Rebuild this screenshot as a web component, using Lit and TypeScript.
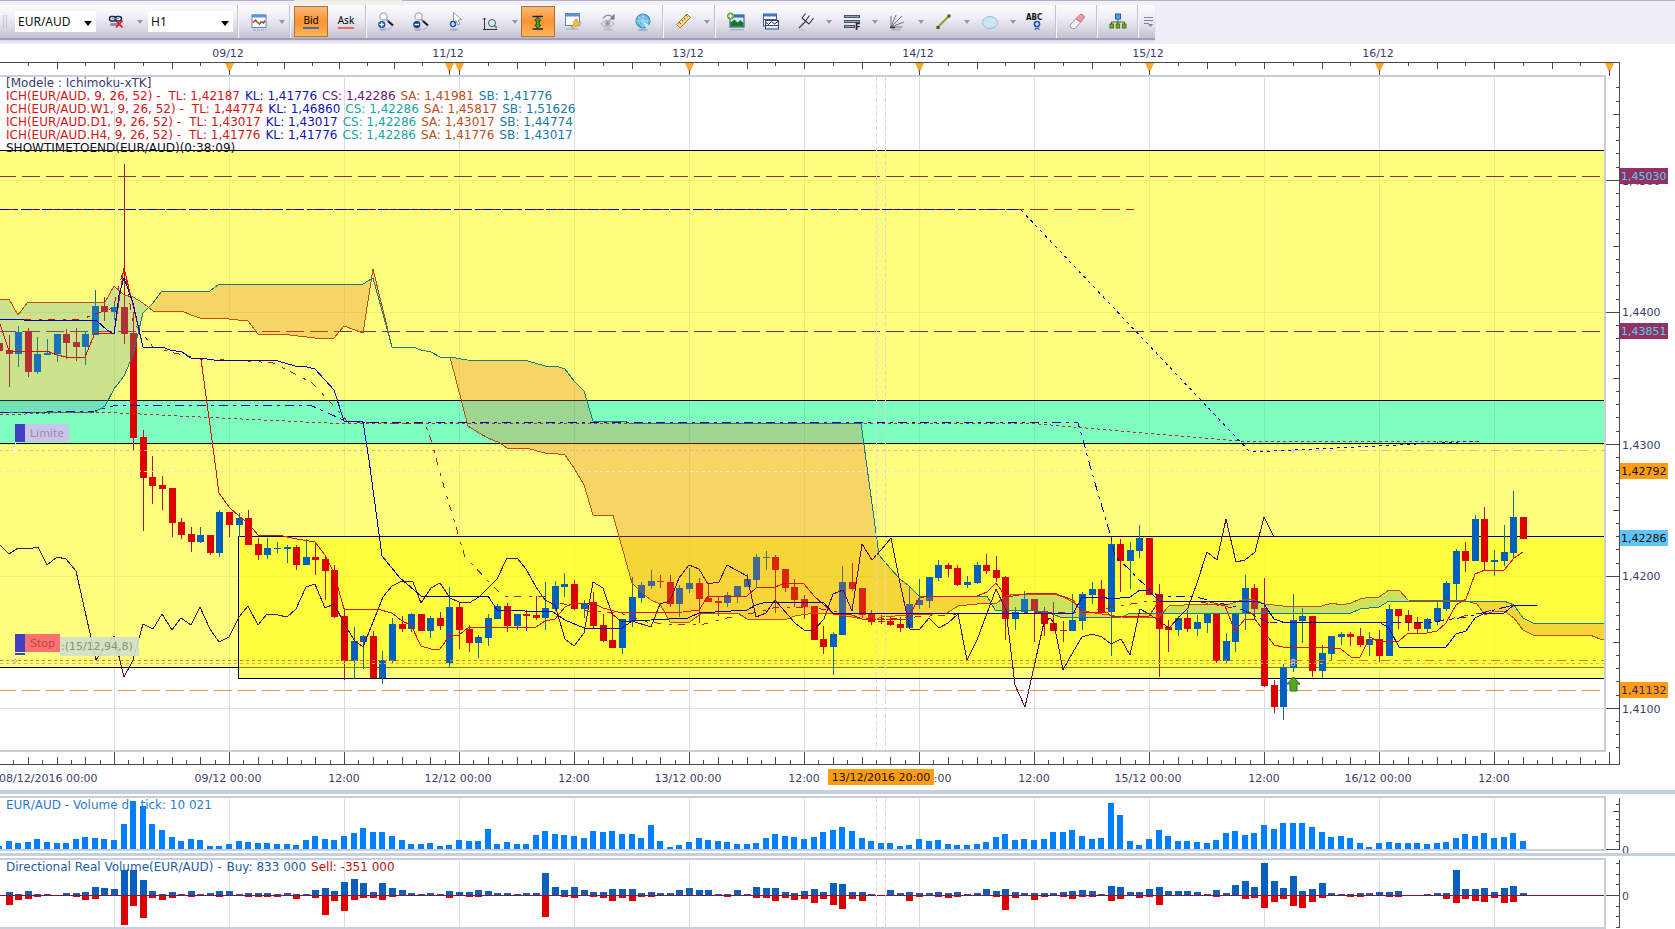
import { LitElement, html, svg, css } from "lit";
import { customElement } from "lit/decorators.js";

/* Horizontal scale: hour 0 is 08/12 00:00, twelve hours span 115 units. */
const xAt = (hour: number) => 114.5 + (hour * 115) / 12;
const PLOT_W = 1606;
const pct = (x: number) => `${(x / PLOT_W) * 100}%`;

/* b = rising, r = falling; body top, body bottom, wick top, wick bottom. */
const CANDLES = `r343 351 343 351|r350 354 335 387|b332 354 326 367|r331 372 328 377|b354 372 337 374|b353 355 339 355|b334 354 334 362|r334 343 329 359|r342 347 328 361|b334 347 331 365|b306 335 290 335|r306 312 297 321|b307 312 301 320|r307 334 164 344|r333 438 312 451|r437 478 430 531|r477 486 456 504|r485 489 476 510|r488 523 488 537|r522 535 518 539|r534 542 527 552|b535 542 527 543|r535 553 535 555|b512 553 510 557|r512 525 512 537|b518 525 513 537|r518 545 510 545|r544 555 538 560|b548 555 538 559|b548 549 542 553|b547 549 545 563|r547 565 545 570|b557 565 539 565|r557 560 542 575|r559 571 557 600|r570 617 565 618|r616 661 608 680|b641 661 627 679|b636 642 635 669|r636 678 631 678|b660 678 651 684|b624 661 618 664|r624 629 616 632|b614 629 613 632|r614 631 614 631|b618 631 616 638|r618 626 612 630|b607 663 587 668|r607 630 602 649|r629 643 625 652|b637 643 635 658|b618 638 614 646|b606 619 604 619|r606 626 603 632|b614 626 614 630|r614 616 610 631|r615 618 596 620|b608 618 582 630|b586 609 581 611|b584 587 573 597|r584 609 580 610|b603 609 600 618|r602 626 592 629|r625 641 614 642|r640 648 613 648|b619 648 619 654|b597 621 577 627|b585 598 582 603|b581 586 570 589|r581 582 575 588|r582 604 575 607|b588 604 585 617|b583 589 568 593|r583 599 578 623|r598 602 583 602|r601 603 597 616|b595 603 592 607|b586 597 586 603|b579 587 574 587|b557 580 554 587|b557 558 551 570|r557 570 555 613|r569 588 569 592|r587 600 579 607|r599 607 595 619|r606 640 606 640|r639 647 626 654|b634 647 632 675|b582 635 566 635|r582 589 563 591|r588 615 588 618|r614 622 610 625|r621 622 615 624|r621 625 617 626|r624 628 617 632|b604 628 587 628|b600 605 579 609|b577 601 577 608|b565 578 560 581|r565 569 563 577|r568 585 565 586|b582 585 576 588|b565 583 562 584|r565 571 554 574|r570 578 556 582|r577 619 576 640|b612 619 607 630|b599 612 591 613|r599 611 599 642|r611 624 607 636|r623 631 602 631|r630 631 621 642|b620 631 594 631|b594 621 592 630|b589 595 582 604|r589 612 580 612|b544 612 537 656|r544 561 539 592|b550 561 542 589|b538 551 525 558|r538 595 538 595|r594 629 584 677|r627 630 620 652|b618 630 616 636|r618 629 610 632|b622 629 615 636|b613 623 613 633|r614 661 614 663|b641 661 633 663|b614 642 614 652|b588 614 575 630|r588 609 584 620|r608 686 578 687|r685 707 680 713|b667 707 664 720|b620 668 594 672|b616 621 608 643|r616 671 616 677|b653 671 645 678|b636 654 636 661|b634 637 632 645|r634 637 632 646|r636 645 628 647|b639 645 632 656|r639 656 630 662|b609 656 605 656|r609 616 609 629|r615 623 610 631|r622 629 617 633|b619 629 618 633|b608 621 600 625|b583 609 581 611|b551 584 549 600|r551 561 542 572|b519 561 515 561|r519 562 507 571|b560 562 550 576|b552 561 525 566|b517 553 491 558|r517 539 517 539`
  .split("|")
  .map((c, i) => {
    const [top, bottom, high, low] = c.slice(1).split(" ").map(Number);
    return { hour: i - 12, up: c[0] === "b", top, bottom, high, low };
  });

const VOLUME = [
  3, 8, 6, 7, 10, 7, 6, 6, 10, 12, 11, 10, 9, 25, 48, 43, 25, 19, 12, 8, 10, 9, 3, 3, 5, 8, 7, 6, 6, 5, 5, 4, 9, 13,
  10, 9, 13, 16, 21, 17, 17, 13, 9, 5, 5, 6, 3, 4, 9, 8, 8, 20, 5, 7, 5, 5, 14, 18, 15, 14, 13, 11, 18, 17, 18, 15,
  15, 11, 24, 8, 2, 4, 7, 11, 9, 8, 7, 5, 5, 6, 11, 15, 13, 12, 10, 12, 17, 19, 22, 18, 11, 8, 6, 6, 3, 4, 10, 8, 9,
  5, 4, 4, 5, 7, 12, 15, 9, 10, 9, 10, 17, 17, 19, 13, 10, 11, 46, 34, 8, 4, 10, 19, 13, 8, 8, 7, 6, 9, 16, 18, 14,
  16, 24, 20, 26, 26, 26, 22, 17, 12, 13, 11, 6, 2, 6, 7, 6, 6, 6, 5, 6, 7, 11, 15, 13, 16, 11, 12, 16, 8,
];

/* Buy height, sell depth per hour. */
const FLOW =
  "0,1 3,10 1,5 4,4 1,2 1,0 0,0 2,0 2,2 3,5 8,4 7,0 6,0 25,30 25,11 15,23 4,3 1,5 3,3 1,0 4,2 1,0 2,0 4,2 4,0 1,0 2,2 2,2 2,2 1,2 2,0 1,4 1,0 5,3 7,20 4,6 13,16 16,5 12,3 3,3 12,5 7,2 5,0 2,0 1,0 2,0 1,0 4,3 3,0 3,2 5,2 4,0 2,0 2,0 1,0 2,0 2,0 22,22 8,0 5,2 8,3 5,0 3,2 3,3 6,6 6,3 6,6 2,2 3,2 2,0 2,0 5,0 7,0 5,0 5,0 1,0 1,2 5,0 1,0 8,3 7,3 7,6 3,3 2,5 4,4 6,8 3,4 12,10 11,14 3,4 3,6 1,0 0,0 5,0 2,0 3,6 2,2 2,0 3,2 2,3 3,2 1,0 2,0 6,0 4,2 6,15 3,3 2,0 2,5 2,2 2,0 3,2 4,4 5,2 4,2 1,0 9,6 8,4 3,0 3,3 6,2 8,10 4,0 4,0 4,0 3,0 1,0 5,2 2,0 10,0 14,4 8,3 32,13 14,7 7,4 19,11 4,13 6,7 12,3 2,0 1,0 1,2 2,2 2,0 3,0 3,2 4,2 0,0 0,0 1,0 2,0 2,4 25,8 6,4 6,6 7,7 3,3 7,8 9,7 2,0"
    .split(" ")
    .map((p) => p.split(",").map(Number));

const SENKOU_A =
  "0,299 9,299 18,315 28,302 105,302 114,286 124,295 133,297 143,303 153,311 182,311 191,315 200,318 219,318 248,321 258,334 290,335 315,338 334,338 344,326 363,333 373,269 392,347 413,347 421,350 431,352 440,357 450,357 468,426 479,433 488,438 500,443 507,448 526,448 545,453 558,454 565,455 574,468 584,485 593,515 613,515 632,583 641,592 651,600 660,604 670,622 690,622 702,613 738,613 747,619 787,619 795,616 814,613 833,614 852,617 862,619 877,619 881,617 910,615 933,614 947,613 958,606 977,604 997,603 1006,596 1015,594 1054,594 1063,597 1073,602 1082,611 1102,614 1122,617 1159,617 1169,606 1200,604 1230,604 1245,599 1255,600 1264,604 1283,606 1322,606 1332,603 1341,605 1351,603 1360,599 1370,597 1379,597 1389,590 1399,590 1408,600 1466,601 1477,604 1485,615 1494,611 1504,611 1514,618 1523,630 1533,635 1590,635 1600,639 1605,639";
const SENKOU_B =
  "0,413 95,412 105,406 114,389 124,376 133,355 143,313 153,303 162,291 210,291 219,284 363,284 373,278 392,347 413,347 421,350 431,352 440,357 450,357 467,360 528,361 545,366 556,366 565,369 574,381 584,391 593,421 624,421 629,423 861,423 879,555 890,568 900,579 909,586 919,596 987,596 995,610 1034,611 1050,613 1060,617 1077,618 1122,617 1130,613 1351,613 1360,609 1379,607 1389,601 1504,601 1514,605 1523,618 1533,623 1605,623";
const TENKAN =
  "0,324 9,351 47,351 57,355 66,357 85,357 95,333 114,334 124,268 133,305 143,347 162,347 170,350 182,352 191,358 201,359 212,440 219,493 229,507 240,517 248,523 258,535 278,535 297,539 315,542 325,555 334,573 344,609 377,609 392,613 402,621 411,625 421,646 431,649 440,649 450,635 459,635 469,627 536,627 545,621 555,619 565,607 574,603 593,603 603,608 622,613 683,612 699,610 708,596 747,596 756,588 775,587 785,583 804,584 814,596 824,605 833,614 852,615 862,619 907,619 919,598 929,596 977,596 987,592 996,583 1006,597 1033,593 1054,593 1073,600 1082,612 1107,612 1111,616 1130,616 1149,616 1159,601 1210,602 1225,606 1235,631 1245,619 1255,619 1274,645 1283,647 1322,647 1341,649 1351,657 1360,657 1370,637 1379,642 1399,641 1408,633 1427,633 1437,631 1446,623 1456,605 1466,599 1475,574 1485,570 1504,570 1514,558 1523,552";
const KIJUN =
  "0,319 24,320 96,320 107,330 114,334 119,295 124,278 133,303 143,347 162,347 170,350 182,352 191,358 200,358 213,360 278,361 295,366 307,367 315,369 334,390 344,421 363,422 369,460 382,556 400,578 421,596 488,596 497,610 553,612 565,620 584,628 622,628 632,621 688,618 699,613 747,610 756,605 766,602 823,602 833,613 1000,613 1073,614 1082,597 1102,597 1111,599 1130,597 1140,590 1149,591 1159,601 1255,601 1264,604 1274,619 1283,622 1379,622 1389,628 1399,647 1446,647 1456,634 1466,631 1475,618 1485,613 1504,613 1514,605 1537,605";
const CHIKOU =
  "0,545 9,554 18,548 33,548 38,547 47,565 57,557 66,559 76,571 96,660 114,636 124,677 133,660 143,624 153,629 162,614 172,630 181,618 191,625 200,607 210,629 219,642 229,637 239,617 248,606 258,625 267,614 278,615 287,617 296,609 306,587 315,584 325,608 334,604 344,623 354,640 363,647 373,622 383,597 392,586 402,581 413,582 421,603 431,588 440,583 450,598 459,602 469,603 479,597 497,579 507,558 517,558 526,569 536,587 545,600 555,605 565,639 574,646 584,633 593,582 603,588 612,614 622,622 632,621 651,627 660,604 670,601 679,578 689,565 699,569 708,584 719,582 727,565 747,576 756,617 766,613 775,600 795,623 804,630 814,630 824,619 833,594 843,590 852,611 862,544 872,560 881,550 891,538 900,583 910,629 919,630 929,618 939,628 948,623 958,614 967,660 977,640 996,589 1006,610 1015,685 1025,707 1034,667 1044,622 1050,618 1054,623 1063,670 1073,652 1082,637 1092,634 1102,637 1111,644 1121,639 1130,655 1140,609 1149,614 1169,628 1183,613 1188,608 1197,583 1207,552 1217,560 1226,519 1236,562 1245,560 1255,552 1264,517 1274,537";
const DAY_RED = "0,415 50,413 100,412 200,417 327,423 1027,423 1239,441 1479,441";
const DAY_BLUE = "0,413 95,411 117,405 310,405 348,422 1078,423 1083,440 1092,473 1111,537 1115,557 1128,568 1137,578 1153,592 1158,596 1197,597 1207,600 1237,607 1245,611 1267,622 1433,622 1466,617 1514,605 1537,605";
const H4_RED =
  "0,319 83,319 92,315 113,308 124,268 133,322 153,347 170,352 200,359 248,361 273,363 293,373 312,383 334,406 348,422 387,423 425,423 432,443 440,473 450,507 465,557 497,590 503,596 543,596 557,602 587,611 620,613 647,622 667,624 700,625 727,618 758,612 777,607 803,607 830,610 862,618 900,618 960,614 1087,612 1113,607 1150,601 1200,602 1245,610 1267,622 1433,622 1485,612 1514,605 1537,605";
const WEEK_BLUE = "1021,210 1250,452 1479,441";

const LEGEND: [string, string, string, string, string, string, boolean][] = [
  ["ICH(EUR/AUD, 9, 26, 52) -", "TL: 1,42187", "KL: 1,41776", "CS: 1,42286", "SA: 1,41981", "SB: 1,41776", true],
  ["ICH(EUR/AUD.W1, 9, 26, 52) -", "TL: 1,44774", "KL: 1,46860", "CS: 1,42286", "SA: 1,45817", "SB: 1,51626", false],
  ["ICH(EUR/AUD.D1, 9, 26, 52) -", "TL: 1,43017", "KL: 1,43017", "CS: 1,42286", "SA: 1,43017", "SB: 1,44774", false],
  ["ICH(EUR/AUD.H4, 9, 26, 52) -", "TL: 1,41776", "KL: 1,41776", "CS: 1,42286", "SA: 1,41776", "SB: 1,43017", false],
];

const GRID_X = Array.from({ length: 13 }, (_, i) => 114.5 + i * 115);

const lens = svg`<circle cx="6.500" cy="4.500" r="3.600" fill="#fafbfc" stroke="#b4b8c0" stroke-width="1.500"/><path d="M9.500 7.500l1.500 1.500" stroke="#8c9098" stroke-width="2"/><path d="M11 9l5 4.500" stroke="#202028" stroke-width="2.200"/><ellipse cx="6" cy="17.500" rx="3.500" ry="1.500" fill="#6880a8" opacity=".4"/><path d="M11 18l4-3" stroke="#888c9c" stroke-width="1.500" opacity=".4"/>`;

const ICONS: Record<string, unknown> = {
  chain: svg`<g fill="none" stroke="#1c2c4c" stroke-width="1.600"><rect x="2.500" y="4.500" width="6.500" height="4.500" rx="2.200"/><rect x="8" y="4.500" width="6.500" height="4.500" rx="2.200"/></g><path d="M5 6.700h7" stroke="#7890b0"/><rect x="3" y="11" width="10" height="3" rx="1.500" fill="#30456c" opacity=".5"/><path d="M9 8.500l6.500 7M15.500 8.500L9 15.500" stroke="#e01818" stroke-width="1.800"/>`,
  chart: svg`<rect x="3" y="3" width="14" height="12.500" fill="#fff" stroke="#5c84bc"/><rect x="3" y="2.500" width="14" height="3" fill="#5c94d8"/><path d="M4 10.500l2.500-2.500 2 2.500" fill="none" stroke="#d82020" stroke-width="1.500"/><path d="M8.500 10.500l2 1.500 2-2.500" fill="none" stroke="#208020" stroke-width="1.500"/><path d="M12.500 9.500l2 1.500 1.500-2.500" fill="none" stroke="#d82020" stroke-width="1.500"/><path d="M4 18h13" stroke="#90a8d0" stroke-width="2" stroke-dasharray="3 1" opacity=".5"/>`,
  zoomin: svg`${lens}<circle cx="4.800" cy="12.500" r="3.600" fill="#1850a8"/><path d="M2.500 12.500h4.600M4.800 10.200v4.600" stroke="#fff" stroke-width="1.300"/>`,
  zoomout: svg`${lens}<circle cx="4.800" cy="12.500" r="3.600" fill="#103c88"/><path d="M2.500 12.500h4.600" stroke="#fff" stroke-width="1.500"/>`,
  cursor: svg`<path d="M6.500.5v10l2.500-2 2 4.500 2-1-2-4 3.500-.5z" fill="#fdfdfe" stroke="#9498a4"/><circle cx="6" cy="12" r="3.200" fill="#2058b0"/><path d="M4 12h4M6 10v4" stroke="#fff" stroke-width="1.200"/><ellipse cx="7" cy="17.500" rx="4" ry="1.500" fill="#6880a8" opacity=".4"/>`,
  axis: svg`<path d="M2.500 6v12M1 7.500L2.500 6 4 7.500M1 17.500h14" fill="none" stroke="#333"/><circle cx="10" cy="11" r="3.500" fill="#c0f4f8" stroke="#505860"/><path d="M12.500 13.500l2.500 2.500" stroke="#a07040" stroke-width="1.800"/>`,
  fit: svg`<path d="M4.500 4.500h10.500M4.500 17h10.500" stroke="#222" stroke-width="1.300"/><path d="M9.800 5l3 3.500h-1.500v4.500h1.500l-3 3.500-3-3.500h1.500V8.500H6.800z" fill="#48a028" stroke="#145014"/>`,
  palette: svg`<rect x="2.500" y="1.500" width="14" height="12" fill="#fff" stroke="#5c84bc"/><rect x="2.500" y="1.500" width="14" height="3" fill="#5c94d8"/><path d="M8 15l3-3c-1-3 1-5 3.500-5l-.5 3h3.500c.5 3-2 4.500-4.500 4l-3 2.500z" fill="#f8c040" stroke="#c08010" stroke-width=".6"/><rect x="3" y="16" width="12" height="2" fill="#90a8d0" opacity=".5"/>`,
  eye: svg`<path d="M3 12c3.500-5 10-5 13 0-3.500 4-9.500 4-13 0z" fill="#e4e4e8" stroke="#a4a4ac"/><circle cx="9.500" cy="11.500" r="3" fill="#b4b4bc"/><circle cx="9.500" cy="11.500" r="1.200" fill="#808088"/><path d="M5 6.500C7 3 11 2.500 14 4.500" fill="none" stroke="#8c8c94" stroke-width="1.300"/><path d="M16.500 1.500v6h-5z" fill="#787880"/><ellipse cx="10" cy="17.500" rx="5" ry="1.200" fill="#90909c" opacity=".4"/>`,
  globe: svg`<circle cx="10" cy="9" r="7" fill="#5cb4e4" stroke="#3480b4"/><path d="M10 9L16 13a7 7 0 0 1-3 3z" fill="#d8f4fc"/><g fill="none" stroke="#b8e0f4" stroke-width=".7"><circle cx="10" cy="9" r="4.500"/><circle cx="10" cy="9" r="2"/><path d="M3 9h14M10 2v14M5 4l10 10"/></g><ellipse cx="10" cy="18" rx="5" ry="1.200" fill="#5080c0" opacity=".4"/>`,
  ruler: svg`<path d="M2.500 12.500L13 2l3.500 3.500L6 16z" fill="#f8d488" stroke="#b87c20"/><path d="M5 10l2 2M7.500 7.500l1.500 1.500M9.500 5.500l2 2M12 3l1.500 1.500" stroke="#8c5c10"/>`,
  image: svg`<rect x="4" y="3" width="14" height="12" fill="#d8ecfc" stroke="#204878"/><rect x="4" y="3" width="14" height="2.500" fill="#3870b8"/><path d="M4.500 14.500v-4l4-3 3 3 3-2.500 3 3v3.500z" fill="#107830"/><circle cx="4.500" cy="4" r="3.500" fill="#68a828"/><path d="M2.500 4h4M4.500 2v4" stroke="#fff" stroke-width="1.300"/><rect x="4" y="17" width="14" height="1.500" fill="#4c9080" opacity=".4"/>`,
  windows: svg`<rect x="2.500" y="2" width="13" height="12" fill="#fff" stroke="#386098"/><rect x="2.500" y="2" width="13" height="2.500" fill="#4078c8"/><path d="M2.500 7.500h13" stroke="#386098"/><rect x="4.500" y="8.500" width="13" height="5" fill="#fff" stroke="#284878"/><path d="M5 10.500l2.500 2 3-3 3 2.500 3.500-2.500" fill="none" stroke="#101010"/><rect x="4.500" y="13.500" width="13" height="3.500" fill="#e8f0fc" stroke="#284878"/>`,
  fork: svg`<path d="M3 16L10 9M6 6l7 6M9.500 1.500L6 6M17.500 6L13 12M13.500 3.500L9.500 9" fill="none" stroke="#3c3c44" stroke-width="1.200"/><path d="M3 18h6" stroke="#888" opacity=".4"/>`,
  lines: svg`<g stroke="#455468" stroke-width="3"><path d="M2 4.500h16M2 9.500h16M2 14.500h11"/></g><path d="M3 4.500h14M3 9.500h14M3 14.500h9" stroke="#94a0b4"/><text x="13" y="18" font-family="DejaVu Sans" font-size="8" font-weight="bold" fill="#222">F</text>`,
  fan: svg`<path d="M3 15V4M3 15L8 3M3 15L14 4M3 15l13-5M3 15h11" fill="none" stroke="#70767c"/><path d="M2 15.500h5" stroke="#303438" stroke-width="1.500"/><ellipse cx="8" cy="17.500" rx="5" ry="1" fill="#777" opacity=".4"/>`,
  line: svg`<path d="M4 15L15 4" stroke="#88a820" stroke-width="2"/><rect x="2.500" y="14" width="3" height="3" fill="#48580c"/><rect x="13.500" y="2.500" width="3" height="3" fill="#48580c"/>`,
  ellipse: svg`<ellipse cx="10" cy="10.500" rx="7.500" ry="6" fill="#cce4f4" stroke="#98bcd8"/>`,
  label: svg`<text x="0" y="8" font-family="DejaVu Sans Condensed, DejaVu Sans" font-size="8" font-weight="bold" fill="#111">ABC</text><circle cx="11" cy="12" r="3.300" fill="#1c50b0"/><path d="M9 12h4M11 10v4" stroke="#fff" stroke-width="1.200"/><path d="M9 15.500l-.5 3 2.500-1.500 2.500 1.500-.5-3z" fill="#5070a8"/>`,
  eraser: svg`<path d="M3 13L9 6.500l4.500 4L8 16.500H5.500L3 15z" fill="#f8f6f8" stroke="#98949c"/><path d="M9 6.500L13 2.500h2.500l2 2.500-4 5.500z" fill="#ec98a0" stroke="#c07880"/>`,
  tree: svg`<path d="M10 6v4M3.500 13v-3h13v3M10 10v3" fill="none" stroke="#406010"/><rect x="7.500" y="2" width="5" height="5" fill="#4ca0f0" stroke="#1c5ca8"/><g fill="#7cb020" stroke="#406c10"><rect x="2" y="12" width="3.500" height="4"/><rect x="8.200" y="12" width="3.500" height="4"/><rect x="14.500" y="12" width="3.500" height="4"/></g>`,
};

@customElement("tool-bar")
class ToolBar extends LitElement {
  static styles = css`
    :host { display: block; height: 44px; background: linear-gradient(90deg, #b4aec6 0 294px, #f6ecc4 294px 402px, #b4aec6 402px) top / 100% 1px no-repeat, #f0eff8; padding-top: 5px; box-sizing: border-box; }
    .bar { display: flex; align-items: center; gap: 1px; height: 35px; width: max-content; padding-right: 1px; box-sizing: border-box; background: linear-gradient(#fdfdfe, #eeedf4 40%, #d6d5e2 75%, #c2c0d2); border-bottom: 2px solid #a09fb6; box-shadow: 0 2px 2px #dcdae8; }
    .grip { width: 11px; height: 14px; margin-right: 3px; background: repeating-linear-gradient(90deg, #c8c6d6 0 1px, transparent 1px 3px) 3px 0 / 6px 100% no-repeat; }
    .field { position: relative; display: block; height: 21px; background: #fff; }
    .field::after { content: ""; position: absolute; right: 4px; top: 10px; border: 4px solid transparent; border-top: 5px solid #000; border-bottom: 0; pointer-events: none; }
    .pair { width: 81px; margin-right: 3px; }
    .period { width: 85px; margin: 0 2px; }
    select { appearance: none; width: 100%; height: 21px; border: 0; padding: 0 3px; background: transparent; font: 12px/21px "Noto Sans", sans-serif; color: #111; }
    button { border: 1px solid transparent; background: none; padding: 0; height: 31px; display: grid; place-items: center; font: 11px/12px "Noto Sans", sans-serif; color: #000; }
    .tool { width: 34px; }
    .on { background: linear-gradient(#f8b878, #fc9430 50%, #ffb45c); border-color: #a87430; }
    .drop { width: 10px; }
    .drop::before { content: ""; border: 3px solid transparent; border-top: 4px solid #9896a8; border-bottom: 0; }
    .sep { width: 1px; height: 33px; background: #f8f8fc; border-left: 1px solid #c4c2d2; margin: 0 2px 0 1px; }
    svg { width: 20px; height: 20px; }
    .side { border-bottom: 2px solid #4c6ea8; padding-bottom: 1px; font-size: 10px; line-height: 11px; }
    .ask { border-color: #e86850; }
    .more { width: 12px; }
    .more svg { width: 9px; height: 12px; }
  `;
  tool(name: string, label: string, drop = false, on = false) {
    return html`<button class="tool ${on ? "on" : ""}" aria-label=${label} title=${label}><svg viewBox="0 0 20 20">${ICONS[name]}</svg></button>${drop ? html`<button class="drop" aria-label="${label} options"></button>` : ""}`;
  }
  render() {
    const sep = html`<span class="sep"></span>`;
    return html`<div class="bar" role="toolbar">
      <span class="grip"></span>
      <label class="field pair"><select aria-label="Symbol"><option>EUR/AUD</option></select></label>
      ${this.tool("chain", "Link", true)}
      <label class="field period"><select aria-label="Period"><option>H1</option></select></label>
      ${sep}${this.tool("chart", "Chart", true)}${sep}
      <button class="tool on"><span class="side">Bid</span></button>
      <button class="tool"><span class="side ask">Ask</span></button>
      ${sep}${this.tool("zoomin", "Zoom in")}${this.tool("zoomout", "Zoom out")}${this.tool("cursor", "Cursor")}${this.tool("axis", "Axis zoom", true)}
      ${this.tool("fit", "Fit height", false, true)}${this.tool("palette", "Colours")}${this.tool("eye", "Refresh view")}${this.tool("globe", "Market")}
      ${sep}${this.tool("ruler", "Measure", true)}${sep}
      ${this.tool("image", "Add indicator")}${this.tool("windows", "Windows")}${this.tool("fork", "Pitchfork", true)}${this.tool("lines", "Fibonacci", true)}
      ${this.tool("fan", "Fan", true)}${this.tool("line", "Line", true)}${this.tool("ellipse", "Ellipse", true)}${this.tool("label", "Text label")}
      ${sep}${this.tool("eraser", "Erase")}${sep}${this.tool("tree", "Structure")}${sep}
      <button class="more" aria-label="More"><svg viewBox="0 0 9 12"><path d="M0 1.500h9M0 4.500h9M0 7.500h5" stroke="#84829a"/><path d="M4 8h5l-2.500 3z" fill="#84829a"/></svg></button>
    </div>`;
  }
}

const common = css`
  :host { display: grid; grid-template-columns: minmax(0, 1fr) 69px; font: 12px/13px "DejaVu Sans", Verdana, sans-serif; color: #3c3c6c; background: #fff; }
  svg { display: block; width: 100%; height: 100%; overflow: visible; }
  text { font: 11px "DejaVu Sans", Verdana, sans-serif; fill: #3c3c6c; }
  .crisp { shape-rendering: crispEdges; fill: none; }
  .axis { stroke: #4a4a4a; }
  .grid { stroke: #dcdce0; }
  .frame { position: relative; overflow: hidden; border: solid #c8cfda; border-width: 2px 2px 2px 0; box-sizing: border-box; }
  .cross { stroke: #d8d8dc; stroke-dasharray: 4 3; }
`;

@customElement("price-chart")
class PriceChart extends LitElement {
  static styles = [
    common,
    css`
      :host { grid-template-rows: 31px minmax(300px, 1fr) 38px; flex: 1; overflow: hidden; }
      .price { min-height: 0; }
      .canvas { position: absolute; inset: 0; }
      .zone { fill: #ffff00; fill-opacity: 0.5; }
      .mint { fill: #00ff80; fill-opacity: 0.5; }
      .edge { stroke: #000; }
      .up { fill: #0060c0; stroke: none; }
      .down { fill: #dc0000; stroke: none; }
      .wup { stroke: #107080; }
      .wdown { stroke: #b80c20; }
      .level { stroke: #84304c; stroke-dasharray: 18 6; stroke-dashoffset: 2; }
      .amber { stroke: #e89830; }
      .tenkan { stroke: #dc1000; }
      .h4 { stroke: #c41400; stroke-dasharray: 7 8 3 6; }
      .day { stroke: #a83820; }
      .kijun { stroke: #0000b8; }
      .chikou { stroke: #600848; }
      .sa { stroke: #c04c10; }
      .sb { stroke: #107c8c; }
      .dot { stroke-dasharray: 3 3; }
      .sparse { stroke-dasharray: 3 4; }
      .dash { stroke-dasharray: 9 5 3 5; }
      .long { stroke-dasharray: 10 3 5 3; }
      .lilac { stroke: #d0b4c4; }
      .faint { stroke: #ece4d0; }
      .stopline { stroke: #f07000; }
      .khaki { stroke: #c4bc70; }
      .legend { position: relative; padding-left: 6px; }
      .line { white-space: nowrap; }
      .row { display: flex; gap: 5px; }
      .row :nth-child(2) { margin-left: 3px; }
      .model { color: #3c3c6c; }
      .tl { color: #d41414; }
      .kl { color: #1010b4; }
      .cs { color: #741080; }
      .csx { color: #18a4a0; }
      .ca { color: #bc4c18; }
      .cb { color: #1878a8; }
      .time { color: #101010; }
      .limit { fill: #d4c0ec; fill-opacity: 0.9; }
      .tagtext { fill: #a088b0; }
      .stoptext { fill: #b84848; }
      .ordertext { fill: #7c9c70; }
      .hot { fill: #ff9c10; }
      .black { fill: #101010; }
      .cyan { fill: #50d0f0; }
      .violet { fill: #402070; }
      .orange { fill: #f8a82c; }
    `,
  ];
  line(points: string, cls: string) {
    return svg`<polyline class="crisp ${cls}" points=${points}/>`;
  }
  ruler() {
    const ticks: { x: number; deep: boolean }[] = [];
    for (let i = -3; i < 4; i++) ticks.push({ x: 229.5 - (4 - i) * 28.75, deep: i % 2 === 0 });
    for (let i = 1; i < 8; i++) ticks.push({ x: 229.5 + i * 27.5, deep: i % 2 === 0 });
    for (let i = 1; i < 40; i++) ticks.push({ x: 459.5 + i * 28.75, deep: i % 2 === 0 });
    const marks = [229.5, 449.5, 459.5, 689.5, 919.5, 1149.5, 1379.5, 1609.5];
    const labels: [number, string][] = [[228, "09/12"], [448, "11/12"], [688, "13/12"], [918, "14/12"], [1148, "15/12"], [1378, "16/12"]];
    return html`<svg>
      <svg viewBox="0 44 1606 31" preserveAspectRatio="none">
        <path class="crisp axis" d="M0 62.500H1620M${ticks.map((t) => `${t.x} 62v${t.deep ? 7 : 4}`).join("M")}"/>
        ${marks.map((x) => svg`<path class="orange" d="M${x - 4.5} 63h9l-4.500 10z"/><path class="crisp axis" d="M${x} 70v6"/>`)}
      </svg>
      ${labels.map(([x, t]) => svg`<text x=${pct(x)} y="13" text-anchor="middle">${t}</text>`)}
    </svg>`;
  }
  plot() {
    return html`<div class="frame">
      <div class="canvas"><svg>
        <svg viewBox="0 77 1604 673" preserveAspectRatio="none">
          <defs><linearGradient id="cloud" gradientUnits="userSpaceOnUse" x1="0" y1="0" x2="1604" y2="0">
            ${[[0, 148, 1], [148, 991, 0], [991, 1078, 1], [1078, 1162, 0], [1162, 1410, 1], [1410, 1604, 0]].map(([a, b, g]) => {
              const c = g ? "#559ea8" : "#e47629";
              return svg`<stop offset=${a / 1604} stop-color=${c}/><stop offset=${b / 1604} stop-color=${c}/>`;
            })}
          </linearGradient></defs>
          <path class="crisp grid" d="${GRID_X.map((x) => `M${x} 77v673`).join("")}${[180.5, 312.5, 444.5, 576.5, 708.5].map((y) => `M0 ${y}h1605`).join("")}"/>
          <rect class="zone" x="0" y="151" width="1605" height="249"/>
          <rect class="mint" x="0" y="400" width="1605" height="43"/>
          <rect class="zone" x="0" y="443" width="1605" height="224"/>
          <path class="crisp edge" d="M0 150.500H1605M0 400.500H1605M0 443.500H1605M0 667.500H1605"/>
          <rect class="zone" x="238" y="537" width="1367" height="141"/>
          <path class="crisp edge" d="M1605 536.500H238.500V678.500H1605"/>
          <path class="crisp level" d="M0 176.500H1604M0 331.500H1604"/>
          <path class="crisp level amber" d="M0 690.500H1604"/>
          ${CANDLES.map((c) => {
            const x = Math.floor(xAt(c.hour));
            return svg`<path class="crisp ${c.up ? "wup" : "wdown"}" d="M${x + 0.5} ${c.high}V${c.low}"/><rect class=${c.up ? "up" : "down"} x=${x - 3} y=${c.top} width="7" height=${Math.max(1, c.bottom - c.top)}/>`;
          })}
          <path fill="url(#cloud)" fill-opacity=".3" d="M${SENKOU_A.split(" ").join("L")}L${SENKOU_B.split(" ").reverse().join("L")}Z"/>
          <path class="crisp lilac dot" d="M0 450.500H1293"/>
          <path class="crisp lilac dash" d="M1293 450.500H1604"/>
          <path class="crisp faint dot" d="M0 471.500H1604"/>
          <path class="crisp khaki dot" d="M0 663.500H1604"/>
          <path class="crisp stopline dot" d="M0 660.500H1293"/>
          <path class="crisp stopline dash" d="M1293 660.500H1604"/>
          ${this.line(SENKOU_A, "sa")}${this.line(SENKOU_B, "sb")}${this.line(CHIKOU, "chikou")}
          ${this.line(TENKAN, "tenkan")}${this.line(H4_RED, "h4")}${this.line(KIJUN, "kijun")}
          ${this.line(DAY_RED, "day dot")}${this.line(DAY_BLUE, "kijun dash")}
          ${this.line("0,209.5 1021,209.5 1134,209.5", "tenkan level")}${this.line("0,209.5 1021,209.5", "kijun long")}${this.line(WEEK_BLUE, "kijun sparse")}
          <path class="crisp cross" d="M876.500 77V750M885.500 77V750"/>
          <g fill="none" stroke="#c8c0d8"><circle cx="1293" cy="451" r="1.500"/><circle cx="1293" cy="661" r="2"/><circle cx="1293" cy="664" r="2"/></g>
          <path d="M1293.500 677l6.500 7h-3v7h-7v-7h-3z" fill="#54a81c" stroke="#2c6c10"/>
          <path class="crisp" d="M15.500 442v8M15.500 652v8" stroke="#f4e4e4"/>
          <circle cx="15" cy="451" r="1.500" fill="#fff"/><circle cx="15" cy="661" r="1.500" fill="#fff" stroke="#f09080"/>
          <rect x="15" y="424" width="10" height="18" fill="#4040c4"/><rect class="limit" x="25" y="424" width="44" height="18"/>
          <rect x="60" y="637" width="79" height="19" fill="#d0e0cc" fill-opacity=".9"/>
          <rect x="15" y="634" width="10" height="18" fill="#4040c4"/><rect x="15" y="653" width="10" height="2" fill="#4040c4"/><rect x="25" y="634" width="35" height="18" fill="#ff7070"/>
        </svg>
        <text class="tagtext" x=${pct(30)} y="53.5%">Limite</text>
        <text class="stoptext" x=${pct(30)} y="84.7%">Stop</text>
        <text class="ordertext" x=${pct(61)} y="85.1%">:(15/12,94,8)</text>
      </svg></div>
      <div class="legend">
        <div class="line model">[Modele : Ichimoku-xTK]</div>
        ${LEGEND.map(([n, tl, kl, cs, sa, sb, own]) => html`<div class="line row"><span class="tl">${n}</span><span class="tl">${tl}</span><span class="kl">${kl}</span><span class=${own ? "cs" : "csx"}>${cs}</span><span class="ca">${sa}</span><span class="cb">${sb}</span></div>`)}
        <div class="line time">SHOWTIMETOEND(EUR/AUD)(0:38:09)</div>
      </div>
    </div>`;
  }
  prices() {
    const ys = Array.from({ length: 51 }, (_, i) => ({ i, y: 87.9 + i * 13.2 }));
    const py = (y: number, shift = 0) => `${((y + shift - 75) / 677) * 100}%`;
    const labels: [number, string][] = [[180.5, "1,4500"], [312.5, "1,4400"], [444.5, "1,4300"], [576.5, "1,4200"], [708.5, "1,4100"]];
    const tags: [number, string, string, string][] = [
      [176, "1,45030", "#943064", "cyan"], [331, "1,43851", "#943064", "cyan"], [471, "1,42792", "#ff9c10", "black"], [538, "1,42286", "#60c4f8", "black"], [690, "1,41132", "#ff9c10", "violet"],
    ];
    return html`<svg class="price">
      <svg viewBox="0 75 69 677" preserveAspectRatio="none">
        <path class="crisp axis" d="M13.500 62V765${ys.map(({ i, y }) => { const k = (i + 3) % 10; const w = k === 0 ? 14 : k === 5 ? 7 : 4; return `M13.500 ${y}h${-w}`; }).join("")}"/>
      </svg>
      ${labels.map(([y, t]) => svg`<text x="16" y=${py(y, 4)}>${t}</text>`)}
      ${tags.map(([y, t, bg, c]) => svg`<rect x="14" y=${py(y, -8)} width="48" height="16" fill=${bg}/><text class=${c} x="15" y=${py(y, 4)}>${t}</text>`)}
    </svg>`;
  }
  times() {
    const labels: [number, string][] = [[228, "09/12 00:00"], [344, "12:00"], [458, "12/12 00:00"], [574, "12:00"], [688, "13/12 00:00"], [804, "12:00"], [918, "14/12 00:00"], [1034, "12:00"], [1148, "15/12 00:00"], [1264, "12:00"], [1378, "16/12 00:00"], [1494, "12:00"]];
    const ticks = Array.from({ length: 112 }, (_, i) => i - 7).map((i) => `M${114.5 + i * 14.375} 764v${i % 8 === 0 ? -12 : i % 2 === 0 ? -7 : -4}`);
    return html`<svg>
      <svg viewBox="0 752 1606 38" preserveAspectRatio="none"><path class="crisp axis" d="M0 764.500H1620${ticks.join("")}M1609.500 752v12"/></svg>
      <text x="-1" y="30">08/12/2016 00:00</text>
      ${labels.map(([x, t]) => svg`<text x=${pct(x)} y="30" text-anchor="middle">${t}</text>`)}
      <svg x=${pct(828)} y="17" width="106" height="16"><rect class="hot" width="106" height="16"/><text class="black" x="53" y="12" text-anchor="middle">13/12/2016 20:00</text></svg>
    </svg>`;
  }
  render() {
    return html`<div>${this.ruler()}</div><span></span>${this.plot()}<div>${this.prices()}</div><div>${this.times()}</div>`;
  }
}

@customElement("volume-panel")
class VolumePanel extends LitElement {
  static styles = [
    common,
    css`
      :host { border-top: 4px solid #c4d0de; padding-top: 2px; height: 63px; box-sizing: border-box; overflow: hidden; }
      .frame { height: 55px; }
      .title { position: absolute; left: 6px; top: 1px; color: #2c7ccc; }
      .bar { fill: #0080ff; }
    `,
  ];
  render() {
    return html`<div class="frame">
      <span class="title">EUR/AUD - Volume du tick: 10 021</span>
      <svg viewBox="0 798 1604 51" preserveAspectRatio="none">
        <path class="crisp grid" d=${GRID_X.map((x) => `M${x} 799v50`).join("")}></path>
        ${VOLUME.map((h, i) => svg`<rect class="bar" x=${Math.floor(xAt(i - 12)) - 3} y=${849 - h} width="6" height=${h}/>`)}
        <path class="crisp cross" d="M876.500 798v51M885.500 798v51"/>
      </svg>
    </div>
    <svg viewBox="0 796 69 57">
      <path class="crisp axis" d="M13.500 798V849.500H0M13.500 804.500h-4M13.500 811.500h-7M13.500 819.500h-4M13.500 826.500h-4M13.500 834.500h-4M13.500 841.500h-4"/>
      <text x="16" y="854">0</text>
    </svg>`;
  }
}

@customElement("flow-panel")
class FlowPanel extends LitElement {
  static styles = [
    common,
    css`
      :host { border-top: 3px solid #c4d0de; padding-top: 2px; height: 76px; box-sizing: border-box; overflow: hidden; }
      .frame { height: 71px; }
      .title { position: absolute; left: 6px; top: 1px; display: flex; gap: 5px; color: #1c5ca8; }
      .sell { color: #c01010; }
      .buybar { fill: #0860bc; }
      .sellbar { fill: #dc0000; }
      .zero { stroke: #8c1428; }
    `,
  ];
  render() {
    return html`<div class="frame">
      <span class="title"><span>Directional Real Volume(EUR/AUD) -</span><span>Buy: 833 000</span><span class="sell">Sell: -351 000</span></span>
      <svg viewBox="0 860 1604 67" preserveAspectRatio="none">
        <path class="crisp grid" d=${GRID_X.map((x) => `M${x} 861v66`).join("")}></path>
        ${FLOW.map(([b, s], i) => {
          const x = Math.floor(xAt(i - 12)) - 3;
          return svg`<rect class="buybar" x=${x} y=${895 - b} width="7" height=${b}/><rect class="sellbar" x=${x} y="895" width="7" height=${s}/>`;
        })}
        <path class="crisp zero" d="M0 895.500H1604"/>
        <path class="crisp cross" d="M876.500 860v67M885.500 860v67"/>
      </svg>
    </div>
    <svg viewBox="0 858 69 71">
      <path class="crisp axis" d="M13.500 860V928M13.500 863.500h-4M13.500 874.500h-4M13.500 884.500h-4M13.500 895.500H0M13.500 906.500h-4M13.500 916.500h-4M13.500 927.500h-4"/>
      <text x="16" y="900">0</text>
    </svg>`;
  }
}

@customElement("app-root")
class AppRoot extends LitElement {
  static styles = css`
    :host { display: flex; flex-direction: column; min-height: 100vh; background: #fff; }
    price-chart { min-height: 400px; }
  `;
  render() {
    return html`<tool-bar></tool-bar><price-chart></price-chart><volume-panel></volume-panel><flow-panel></flow-panel>`;
  }
}
